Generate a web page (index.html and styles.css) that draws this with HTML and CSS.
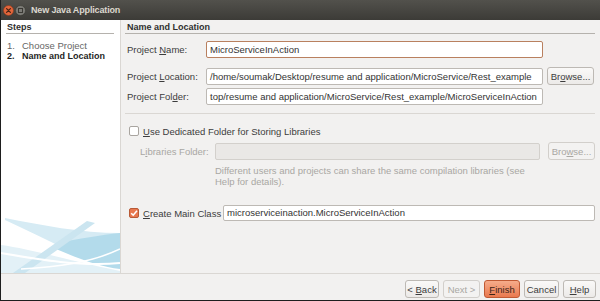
FILE: index.html
```html
<!DOCTYPE html>
<html lang="en">
<head>
  <meta charset="UTF-8" />
  <title>New Java Application</title>
  <link rel="stylesheet" href="styles.css">
</head>
<body>
  <div class="window">
    <div class="titlebar">
      <span class="wbtn close">
        <svg width="11" height="11" viewBox="0 0 11 11">
          <circle cx="5.5" cy="5.5" r="5" fill="#e2663c" stroke="#8f3a1c" stroke-width="0.6"/>
          <path d="M3.6 3.6 L7.4 7.4 M7.4 3.6 L3.6 7.4" stroke="#4a2414" stroke-width="1.3" stroke-linecap="round"/>
        </svg>
      </span>
      <span class="wbtn">
        <svg width="11" height="11" viewBox="0 0 11 11">
          <circle cx="5.5" cy="5.5" r="5" fill="#7c7b76" stroke="#36352f" stroke-width="0.6"/>
          <rect x="3.5" y="3.5" width="4" height="4" fill="none" stroke="#3a3934" stroke-width="1"/>
        </svg>
      </span>
      <span class="title">New Java Application</span>
    </div>

    <div class="body">
      <aside class="steps">
        <h2>Steps</h2>
        <ol class="step-list">
          <li><span class="num">1.</span>Choose Project</li>
          <li class="current"><span class="num">2.</span>Name and Location</li>
        </ol>
        <svg class="swoosh" width="119" height="64" viewBox="0 0 119 64">
          <path d="M0 36 C30 40 70 52 119 62 L119 64 L0 64 Z" fill="#e3f1f7"/>
          <path d="M4 9 C40 16 80 24 119 24 L119 58 C85 52 45 30 4 11 Z" fill="#d6ebf4"/>
          <path d="M55 34 C78 30 100 26 119 24 L119 60 C100 58 78 50 55 40 Z" fill="#b3dbeb"/>
          <path d="M12 64 L86 12 L94 14 L24 64 Z" fill="#cbe5f0"/>
          <path d="M0 44 C35 50 80 58 119 54" fill="none" stroke="#ffffff" stroke-width="2"/>
          <path d="M20 60 C55 58 90 54 119 40" fill="none" stroke="#ffffff" stroke-width="1.5"/>
        </svg>
      </aside>

      <main class="panel">
        <h2>Name and Location</h2>

        <div class="form">
          <div class="row row-name">
            <label class="lbl">Project <u>N</u>ame:</label>
            <div class="field focused">MicroServiceInAction</div>
          </div>
          <div class="row row-loc">
            <label class="lbl">Project <u>L</u>ocation:</label>
            <div class="field">/home/soumak/Desktop/resume and application/MicroService/Rest_example</div>
            <button class="btn browse">Br<u>o</u>wse...</button>
          </div>
          <div class="row row-folder">
            <label class="lbl">Project Fol<u>d</u>er:</label>
            <div class="field">top/resume and application/MicroService/Rest_example/MicroServiceInAction</div>
          </div>
        </div>

        <div class="sep"></div>

        <div class="check-row">
          <span class="box"></span>
          <span><u>U</u>se Dedicated Folder for Storing Libraries</span>
        </div>

        <div class="row row-lib disabled">
          <label class="lbl lib-lbl">L<u>i</u>braries Folder:</label>
          <div class="field lib-field"></div>
          <button class="btn browse" disabled>Bro<u>w</u>se...</button>
        </div>
        <p class="hint">Different users and projects can share the same compilation libraries (see<br>Help for details).</p>

        <div class="check-row main-class">
          <span class="box checked">
            <svg width="10" height="10" viewBox="0 0 10 10">
              <path d="M2.2 5.2 L4.2 7.2 L8 2.8" fill="none" stroke="#fff" stroke-width="1.6"/>
            </svg>
          </span>
          <span class="main-lbl"><u>C</u>reate Main Class</span>
          <div class="field grow">microserviceinaction.MicroServiceInAction</div>
        </div>
      </main>
    </div>

    <div class="footer">
      <button class="btn b-back">&lt; <u>B</u>ack</button>
      <button class="btn b-next" disabled>Next &gt;</button>
      <button class="btn primary b-finish"><u>F</u>inish</button>
      <button class="btn b-cancel">Cancel</button>
      <button class="btn b-help"><u>H</u>elp</button>
    </div>
  </div>
</body>
</html>
```

FILE: styles.css
```css
:root {
  --font-ui: 'Liberation Sans', Arial, sans-serif;
  --text: #3c3c3c;
  --text-dim: #a9a7a3;
  --panel-bg: #f2f1f0;
  --line: #b5b2ad;
  --line-soft: #dad7d3;
  --field-border: #bdb9b4;
  --accent: #e8784f;
}
*, *::before, *::after { box-sizing: border-box; }

html, body {
  margin: 0;
  padding: 0;
  width: 600px;
  height: 301px;
  overflow: hidden;
}
body {
  font-family: var(--font-ui);
  font-size: 9.5px;
  color: var(--text);
}
u { text-decoration: underline; text-underline-offset: 1px; }

.window {
  display: flex;
  flex-direction: column;
  width: 600px;
  height: 301px;
  background: var(--panel-bg);
  border-left: 1px solid #1e1e1e;
  border-bottom: 1px solid #1e1e1e;
}

/* title bar */
.titlebar {
  display: flex;
  align-items: center;
  height: 20px;
  padding-left: 2px;
  background: linear-gradient(#52514c, #3c3b37);
  color: #dcd8cf;
}
.wbtn { display: flex; width: 12px; }
.wbtn svg { display: block; }
.title {
  margin-left: 4px;
  font-weight: bold;
  font-size: 9px;
  letter-spacing: -0.15px;
}

.body {
  display: flex;
  flex: 1;
  min-height: 0;
}

/* left wizard steps */
.steps {
  display: flex;
  flex-direction: column;
  width: 120px;
  padding: 1px 6px 0 5px;
  background: #fff;
  border-right: 1px solid var(--line-soft);
  position: relative;
}
h2 {
  margin: 0;
  height: 13px;
  line-height: 12px;
  padding-left: 1px;
  font-size: 9px;
  font-weight: bold;
  color: #2f2f2f;
  border-bottom: 1px solid var(--line);
}
.step-list {
  list-style: none;
  margin: 7px 0 0;
  padding: 0 0 0 1px;
  line-height: 10px;
  color: #666;
}
.step-list .num { display: inline-block; width: 15px; }
.step-list .current { color: #1f1f1f; font-weight: bold; font-size: 9px; }
.swoosh {
  position: absolute;
  left: 0;
  bottom: 0;
}

/* right content */
.panel {
  flex: 1;
  padding: 1px 5px 0 4px;
}
.panel h2 { padding-left: 2px; }

.form { padding-left: 2px; margin-top: 7px; }
.row {
  display: flex;
  align-items: center;
}
.lbl { width: 79px; flex: none; }
.field {
  height: 17px;
  width: 337px;
  padding: 0 3px;
  line-height: 15px;
  background: #fff;
  border: 1px solid var(--field-border);
  border-radius: 2px;
  white-space: nowrap;
  overflow: hidden;
  color: #333;
}
.field.focused { border-color: #b9805f; }
.row-loc { margin-top: 9px; }
.row-folder { margin-top: 3px; }

.btn {
  height: 18px;
  padding: 0 4px;
  font-family: var(--font-ui);
  font-size: 9.5px;
  color: var(--text);
  background: linear-gradient(#faf9f8, #eceae8);
  border: 1px solid var(--field-border);
  border-radius: 3px;
}
.btn:disabled { color: var(--text-dim); border-color: #d2cfcb; background: #f3f2f1; }
.browse { margin-left: 4px; width: 47px; height: 18px; padding: 0; }

.sep {
  height: 1px;
  margin-top: 8px;
  background: var(--line-soft);
}

.check-row {
  display: flex;
  align-items: center;
  height: 12px;
  margin-top: 11px;
  padding-left: 4px;
}
.box {
  width: 10px;
  height: 10px;
  margin-right: 4px;
  background: #fff;
  border: 1px solid #a9a5a0;
  border-radius: 2px;
}
.box.checked {
  display: flex;
  background: var(--accent);
  border-color: #b85a36;
}
.box.checked svg { margin: -1px; }

.row-lib { margin-top: 5px; padding-left: 15px; }
.disabled { color: var(--text-dim); }
.lib-lbl { width: 75px; }
.lib-field {
  width: 325px;
  height: 17px;
  background: #eae8e6;
  border-color: #d3d0cc;
}
.row-lib .browse { margin-left: 8px; }

.hint {
  margin: 5px 0 0 90px;
  line-height: 11px;
  color: var(--text-dim);
  white-space: nowrap;
}

.main-class { height: 16px; margin-top: 18px; }
.main-lbl { width: 80px; flex: none; }
.field.grow { flex: 1; width: auto; height: 16px; line-height: 14px; }

/* buttons at the bottom */
.footer {
  display: flex;
  justify-content: flex-end;
  gap: 4px;
  height: 27px;
  padding: 6px 4px 0 0;
  border-top: 1px solid var(--line-soft);
}
.b-back { width: 34px; padding: 0; }
.b-next { width: 37px; padding: 0; }
.b-finish { width: 36px; padding: 0; }
.b-cancel { width: 35px; padding: 0; }
.b-help { width: 33px; padding: 0; }
.primary {
  color: #3b2418;
  background: linear-gradient(#f6ac8b, #e9794f);
  border-color: #c05a34;
}
```
